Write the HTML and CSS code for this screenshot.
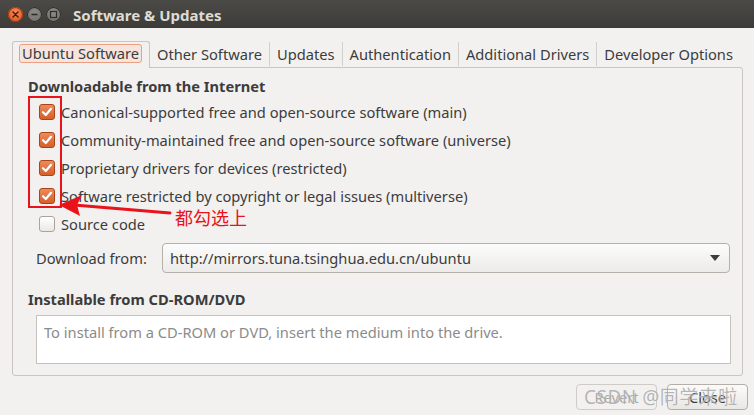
FILE: index.html
```html
<!DOCTYPE html>
<html>
<head>
<meta charset="utf-8">
<title>Software &amp; Updates</title>
<link rel="stylesheet" href="styles.css">
</head>
<body>
<div class="titlebar">
  <div class="wbtns">
    <span class="wbtn wbtn-close"><svg width="15" height="15" viewBox="0 0 15 15"><path d="M5 5 L10 10 M10 5 L5 10" stroke="#3c1a0c" stroke-width="1.4" stroke-linecap="round"/></svg></span>
    <span class="wbtn"><svg width="15" height="15" viewBox="0 0 15 15"><path d="M4.5 7.5 H10.5" stroke="#2e2d2a" stroke-width="1.6"/></svg></span>
    <span class="wbtn"><svg width="15" height="15" viewBox="0 0 15 15"><rect x="4.5" y="4.5" width="6" height="6" fill="none" stroke="#2e2d2a" stroke-width="1.2"/></svg></span>
  </div>
  <div class="title">Software &amp; Updates</div>
</div>

<div class="main">
  <div class="tabs">
    <div class="tab tab-active"><span class="tab-focus">Ubuntu Software</span></div>
    <div class="tab">Other Software</div>
    <div class="tab tab-sep">Updates</div>
    <div class="tab tab-sep">Authentication</div>
    <div class="tab tab-sep">Additional Drivers</div>
    <div class="tab tab-sep">Developer Options</div>
  </div>

  <div class="pane">
    <div class="heading">Downloadable from the Internet</div>
    <div class="check-row"><span class="cb cb-on"><svg width="16" height="16" viewBox="0 0 16 16"><path d="M4 8.2 L6.8 11 L12 4.8" fill="none" stroke="#fff" stroke-width="2.2" stroke-linecap="round" stroke-linejoin="round"/></svg></span><span>Canonical-supported free and open-source software (main)</span></div>
    <div class="check-row"><span class="cb cb-on"><svg width="16" height="16" viewBox="0 0 16 16"><path d="M4 8.2 L6.8 11 L12 4.8" fill="none" stroke="#fff" stroke-width="2.2" stroke-linecap="round" stroke-linejoin="round"/></svg></span><span>Community-maintained free and open-source software (universe)</span></div>
    <div class="check-row"><span class="cb cb-on"><svg width="16" height="16" viewBox="0 0 16 16"><path d="M4 8.2 L6.8 11 L12 4.8" fill="none" stroke="#fff" stroke-width="2.2" stroke-linecap="round" stroke-linejoin="round"/></svg></span><span>Proprietary drivers for devices (restricted)</span></div>
    <div class="check-row"><span class="cb cb-on"><svg width="16" height="16" viewBox="0 0 16 16"><path d="M4 8.2 L6.8 11 L12 4.8" fill="none" stroke="#fff" stroke-width="2.2" stroke-linecap="round" stroke-linejoin="round"/></svg></span><span>Software restricted by copyright or legal issues (multiverse)</span></div>
    <div class="check-row"><span class="cb"></span><span>Source code</span></div>

    <div class="dl-row">
      <span class="dl-label">Download from:</span>
      <div class="combo">
        <span>http://mirrors.tuna.tsinghua.edu.cn/ubuntu</span>
        <svg width="10" height="6" viewBox="0 0 10 6"><path d="M0 0 H10 L5 6 Z" fill="#3c3c3c"/></svg>
      </div>
    </div>

    <div class="heading heading-2">Installable from CD-ROM/DVD</div>
    <div class="cdbox">To install from a CD-ROM or DVD, insert the medium into the drive.</div>
  </div>

  <div class="actions">
    <button class="btn btn-disabled">Revert</button>
    <button class="btn">Close</button>
  </div>
</div>

<svg class="annot" width="754" height="415" viewBox="0 0 754 415">
  <rect x="29" y="97" width="32" height="110" fill="none" stroke="#e8131b" stroke-width="2"/>
  <path d="M170 213 L74 205" stroke="#e8131b" stroke-width="3" stroke-linecap="round"/>
  <path d="M59 205 L82 195 L77 205 L80 216 Z" fill="#e8131b"/>
</svg>
<div class="annot-text">都勾选上</div>
<div class="watermark">CSDN @同学来啦</div>
</body>
</html>
```

FILE: styles.css
```css
html, body {
  margin: 0;
  padding: 0;
}
body {
  width: 754px;
  height: 415px;
  overflow: hidden;
  background: #f2f1f0;
  font-family: "Noto Sans", "Open Sans", sans-serif;
  font-size: 14.67px;
  color: #3c3c3c;
  position: relative;
}

/* title bar */
.titlebar {
  height: 28px;
  background: linear-gradient(#4b4a46, #3c3b37);
  display: flex;
  align-items: center;
  padding-left: 8px;
  padding-top: 1px;
  box-sizing: border-box;
}
.wbtns {
  display: flex;
  gap: 4px;
}
.wbtn {
  width: 15px;
  height: 15px;
  border-radius: 50%;
  background: radial-gradient(circle at 50% 35%, #8c8b86, #6c6b66);
  box-shadow: inset 0 0 0 1px #2f2e2b;
  display: flex;
}
.wbtn-close {
  background: radial-gradient(circle at 50% 35%, #f58a5c, #dd4814);
  box-shadow: inset 0 0 0 1px #a8360e;
}
.title {
  margin-left: 12px;
  color: #dfdbd2;
  font-weight: bold;
  font-size: 15px;
}

/* main */
.main {
  padding: 13px 11px 0 12px;
}
.tabs {
  display: flex;
  align-items: flex-end;
  height: 27px;
  margin-bottom: -1px;
  position: relative;
  z-index: 1;
}
.tab {
  height: 24px;
  line-height: 24px;
  margin-bottom: 2px;
  padding: 0 7px;
  white-space: nowrap;
  box-sizing: border-box;
}
.tab-sep {
  border-left: 1px solid #d3cfca;
}
.tab-active {
  height: 27px;
  margin-bottom: 0;
  border: 1px solid #c9c5c0;
  border-bottom: none;
  border-radius: 3px 3px 0 0;
  background: #f2f1f0;
  padding: 2px 7px 0 6px;
  line-height: 17px;
}
.tab-focus {
  display: inline-block;
  padding: 0 2px;
  height: 19px;
  line-height: 17px;
  box-sizing: border-box;
  border: 1px solid #eb9f83;
  border-radius: 3px;
  background: #f7e4dc;
}

.pane {
  border: 1px solid #c9c5c0;
  border-radius: 0 3px 3px 3px;
  padding: 8px 11px 11px 15px;
  height: 309px;
  box-sizing: border-box;
}
.heading {
  font-weight: bold;
  height: 22px;
  line-height: 20px;
}
.heading-2 {
  margin-top: 16px;
}
.check-row {
  display: flex;
  align-items: center;
  height: 28px;
  padding-left: 11px;
  white-space: nowrap;
}
.cb {
  width: 16px;
  height: 16px;
  box-sizing: border-box;
  border-radius: 3px;
  border: 1px solid #a9a49e;
  background: linear-gradient(#ffffff, #eae8e5);
  margin-right: 6px;
  display: flex;
  flex: none;
}
.cb-on {
  border-color: #a94318;
  background: linear-gradient(#ef8a5a, #d65f2a);
}
.cb-on svg {
  margin: -1px;
}

.dl-row {
  display: flex;
  align-items: center;
  margin-top: 5px;
  padding-left: 8px;
}
.dl-label {
  width: 126px;
  flex: none;
}
.combo {
  flex: 1;
  height: 30px;
  box-sizing: border-box;
  border: 1px solid #b5b0aa;
  border-radius: 4px;
  background: linear-gradient(#fcfcfc, #ecebe9);
  display: flex;
  align-items: center;
  justify-content: space-between;
  padding: 0 9px 0 7px;
  margin-right: 1px;
}

.cdbox {
  margin-top: 4px;
  margin-left: 8px;
  height: 49px;
  box-sizing: border-box;
  border: 1px solid #c6c2bd;
  background: #ffffff;
  color: #8b8b8b;
  padding: 6px 7px;
  line-height: 20px;
}

.actions {
  display: flex;
  justify-content: flex-end;
  gap: 10px;
  margin-top: 8px;
  margin-right: -5px;
}
.btn {
  font-family: inherit;
  font-size: 14.67px;
  color: #3c3c3c;
  height: 26px;
  padding: 0;
  width: 81px;
  border: 1px solid #b3aea8;
  border-radius: 4px;
  background: linear-gradient(#fbfbfa, #e9e7e4);
}
.btn-disabled {
  color: #a9a7a4;
  border-color: #cfcbc6;
  background: #f2f1f0;
}

/* annotations */
.annot {
  position: absolute;
  left: 0;
  top: 0;
  pointer-events: none;
}
.annot-text {
  position: absolute;
  left: 175px;
  top: 204px;
  color: #e8131b;
  font-family: "Noto Sans CJK SC", sans-serif;
  font-size: 18px;
  line-height: 26px;
}
.watermark {
  position: absolute;
  left: 584px;
  top: 385px;
  color: rgba(120, 120, 120, 0.55);
  text-shadow: 0 0 1px rgba(255, 255, 255, 0.8);
  font-family: "Noto Sans", "Noto Sans CJK SC", sans-serif;
  font-size: 19px;
  line-height: 24px;
  letter-spacing: 0.5px;
  white-space: nowrap;
}
```
